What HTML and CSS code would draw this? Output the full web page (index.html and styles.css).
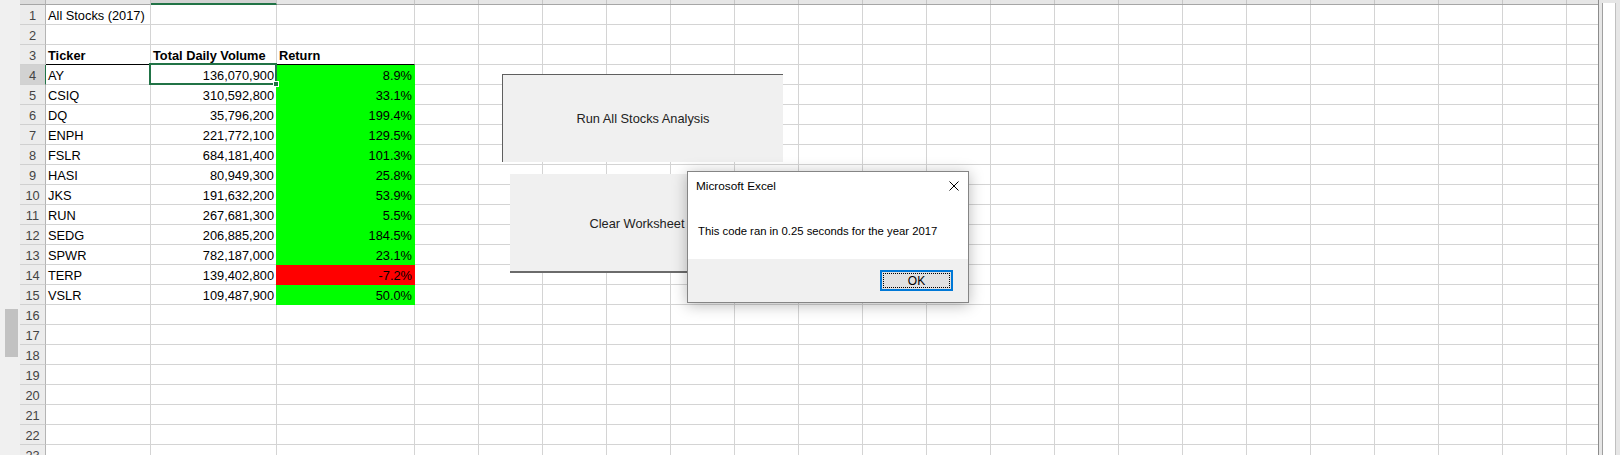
FILE: index.html
```html
<!DOCTYPE html>
<html>
<head>
<meta charset="utf-8">
<title>All Stocks (2017)</title>
<link rel="stylesheet" href="styles.css">
</head>
<body>
<div class="app">
  <div class="lstrip"><div class="thumb"></div></div>
  <div class="sheet">
    <div class="hrow"><div class="hcorner"></div><div class="hc a"></div><div class="hc b sel"></div><div class="hc cc"></div><div class="hfill"></div></div>
    <div class="row"><div class="rh">1</div><div class="c a">All Stocks (2017)</div><div class="c b"></div><div class="c cc"></div><div class="fill"></div></div>
    <div class="row"><div class="rh">2</div><div class="c a"></div><div class="c b"></div><div class="c cc"></div><div class="fill"></div></div>
    <div class="row"><div class="rh">3</div><div class="c a th">Ticker</div><div class="c b th">Total Daily Volume</div><div class="c cc th">Return</div><div class="fill"></div></div>
    <div class="row"><div class="rh sel">4</div><div class="c a">AY</div><div class="c b num active">136,070,900<div class="selbox"></div><div class="handle"></div></div><div class="c cc num g">8.9%</div><div class="fill"></div></div>
    <div class="row"><div class="rh">5</div><div class="c a">CSIQ</div><div class="c b num">310,592,800</div><div class="c cc num g">33.1%</div><div class="fill"></div></div>
    <div class="row"><div class="rh">6</div><div class="c a">DQ</div><div class="c b num">35,796,200</div><div class="c cc num g">199.4%</div><div class="fill"></div></div>
    <div class="row"><div class="rh">7</div><div class="c a">ENPH</div><div class="c b num">221,772,100</div><div class="c cc num g">129.5%</div><div class="fill"></div></div>
    <div class="row"><div class="rh">8</div><div class="c a">FSLR</div><div class="c b num">684,181,400</div><div class="c cc num g">101.3%</div><div class="fill"></div></div>
    <div class="row"><div class="rh">9</div><div class="c a">HASI</div><div class="c b num">80,949,300</div><div class="c cc num g">25.8%</div><div class="fill"></div></div>
    <div class="row"><div class="rh">10</div><div class="c a">JKS</div><div class="c b num">191,632,200</div><div class="c cc num g">53.9%</div><div class="fill"></div></div>
    <div class="row"><div class="rh">11</div><div class="c a">RUN</div><div class="c b num">267,681,300</div><div class="c cc num g">5.5%</div><div class="fill"></div></div>
    <div class="row"><div class="rh">12</div><div class="c a">SEDG</div><div class="c b num">206,885,200</div><div class="c cc num g">184.5%</div><div class="fill"></div></div>
    <div class="row"><div class="rh">13</div><div class="c a">SPWR</div><div class="c b num">782,187,000</div><div class="c cc num g">23.1%</div><div class="fill"></div></div>
    <div class="row"><div class="rh">14</div><div class="c a">TERP</div><div class="c b num">139,402,800</div><div class="c cc num r">-7.2%</div><div class="fill"></div></div>
    <div class="row"><div class="rh">15</div><div class="c a">VSLR</div><div class="c b num">109,487,900</div><div class="c cc num g">50.0%</div><div class="fill"></div></div>
    <div class="row"><div class="rh">16</div><div class="c a"></div><div class="c b"></div><div class="c cc"></div><div class="fill"></div></div>
    <div class="row"><div class="rh">17</div><div class="c a"></div><div class="c b"></div><div class="c cc"></div><div class="fill"></div></div>
    <div class="row"><div class="rh">18</div><div class="c a"></div><div class="c b"></div><div class="c cc"></div><div class="fill"></div></div>
    <div class="row"><div class="rh">19</div><div class="c a"></div><div class="c b"></div><div class="c cc"></div><div class="fill"></div></div>
    <div class="row"><div class="rh">20</div><div class="c a"></div><div class="c b"></div><div class="c cc"></div><div class="fill"></div></div>
    <div class="row"><div class="rh">21</div><div class="c a"></div><div class="c b"></div><div class="c cc"></div><div class="fill"></div></div>
    <div class="row"><div class="rh">22</div><div class="c a"></div><div class="c b"></div><div class="c cc"></div><div class="fill"></div></div>
    <div class="row"><div class="rh">23</div><div class="c a"></div><div class="c b"></div><div class="c cc"></div><div class="fill"></div></div>
  </div>
  <div class="rpanel"><div class="rtrack"></div></div>

  <div class="btn btn-run">Run All Stocks Analysis</div>
  <div class="btn btn-clear">Clear Worksheet</div>

  <div class="dlg">
    <div class="dlg-title">
      <span>Microsoft Excel</span>
      <svg class="dlg-x" width="10" height="10" viewBox="0 0 10 10"><path d="M0.5 0.5 L9.5 9.5 M9.5 0.5 L0.5 9.5" stroke="#000" stroke-width="1" fill="none"/></svg>
    </div>
    <div class="dlg-msg">This code ran in 0.25 seconds for the year 2017</div>
    <div class="dlg-foot"><div class="ok">OK</div></div>
  </div>
</div>
</body>
</html>
```

FILE: styles.css
```css
html, body {
  margin: 0;
  padding: 0;
  background: #ffffff;
}
body {
  width: 1620px;
  height: 455px;
  overflow: hidden;
  font-family: "Liberation Sans", Arial, sans-serif;
  color: #000;
}
.app {
  position: relative;
  display: flex;
  width: 1620px;
  height: 455px;
  overflow: hidden;
}

/* left scroll strip */
.lstrip {
  flex: none;
  width: 20px;
  box-sizing: border-box;
  padding-top: 309px;
  background: #f0f0f0;
}
.thumb {
  margin-left: 5px;
  width: 13px;
  height: 48px;
  background: #c2c2c2;
}

/* sheet */
.sheet {
  flex: none;
  width: 1579px;
  box-sizing: border-box;
  border-right: 1px solid #8c8c8c;
  display: flex;
  flex-direction: column;
}
.hrow {
  display: flex;
  height: 5px;
  flex: none;
}
.hcorner {
  width: 26px;
  box-sizing: border-box;
  background: #dcdcdc;
  border-right: 1px solid #b4b4b4;
  border-bottom: 1px solid #a6a6a6;
}
.hc {
  box-sizing: border-box;
  background: #e6e6e6;
  border-right: 1px solid #c6c6c6;
  border-bottom: 1px solid #a6a6a6;
}
.hc.sel {
  background: #d2d2d2;
  border-bottom: 2px solid #217346;
}
.hfill {
  flex: 1;
  border-bottom: 1px solid #a6a6a6;
  background: repeating-linear-gradient(to right, #e6e6e6 0 63px, #c6c6c6 63px 64px);
}

.row {
  display: flex;
  height: 20px;
  flex: none;
}
.rh {
  width: 26px;
  box-sizing: border-box;
  background: #ececec;
  border-right: 1px solid #b4b4b4;
  border-bottom: 1px solid #d0d0d0;
  text-align: center;
  color: #444;
  font-size: 12.8px;
  line-height: 16px;
  padding-top: 3px;
}
.rh.sel {
  background: #d2d2d2;
  border-right-color: #217346;
}
.c {
  box-sizing: border-box;
  border-right: 1px solid #d4d4d4;
  border-bottom: 1px solid #d4d4d4;
  padding: 3px 2px 0 2px;
  font-size: 12.8px;
  line-height: 16px;
  white-space: nowrap;
}
.a { width: 105px; }
.b { width: 126px; }
.cc { width: 138px; }
.num { text-align: right; }
.th {
  font-weight: bold;
  border-bottom-color: #000;
}
.g {
  background: #00ff00;
  border-right-color: #00ff00;
  border-bottom-color: #00ff00;
  box-shadow: -1px 0 0 #00ff00;
}
.r {
  background: #ff0000;
  border-right-color: #ff0000;
  border-bottom-color: #ff0000;
  box-shadow: -1px 0 0 #ff0000;
}
.fill {
  flex: 1;
  border-bottom: 1px solid #d4d4d4;
  background: repeating-linear-gradient(to right, transparent 0 63px, #d4d4d4 63px 64px);
}

/* active cell */
.active { position: relative; }
.selbox {
  position: absolute;
  left: -2px;
  top: -2px;
  right: -1px;
  bottom: -1px;
  border: 2px solid #217346;
}
.handle {
  position: absolute;
  right: -3px;
  bottom: -3px;
  width: 6px;
  height: 6px;
  box-sizing: border-box;
  background: #217346;
  border: 1px solid #ffffff;
}

/* right scroll panel */
.rpanel {
  flex: 1;
  background: #e6e6e6;
  padding: 3px 4px 0 3px;
}
.rtrack {
  height: 100%;
  background: #ffffff;
  border-left: 1px solid #a0a0a0;
  border-right: 1px solid #c0c0c0;
}

/* form buttons over the sheet */
.btn {
  position: absolute;
  box-sizing: border-box;
  background: #f0f0f0;
  display: flex;
  align-items: center;
  justify-content: center;
  font-size: 12.8px;
  color: #222;
}
.btn-run {
  left: 502px;
  top: 74px;
  width: 281px;
  height: 88px;
  border-top: 1px solid #5f5f5f;
  border-left: 1px solid #5f5f5f;
}
.btn-clear {
  left: 510px;
  top: 174px;
  width: 254px;
  height: 99px;
  border-bottom: 2px solid #6b6b6b;
  padding-top: 2px;
}

/* message box */
.dlg {
  position: absolute;
  left: 687px;
  top: 171px;
  width: 282px;
  height: 132px;
  box-sizing: border-box;
  border: 1px solid #858585;
  background: #ffffff;
  box-shadow: 0 2px 14px rgba(0, 0, 0, 0.28);
  display: flex;
  flex-direction: column;
}
.dlg-title {
  display: flex;
  justify-content: space-between;
  align-items: flex-start;
  padding: 6px 9px 0 8px;
  height: 16px;
  font-size: 11.8px;
  line-height: 16px;
}
.dlg-x {
  margin-top: 3px;
  display: block;
}
.dlg-msg {
  flex: 1;
  margin-top: 29px;
  padding-left: 10px;
  font-size: 11.3px;
  line-height: 16px;
  white-space: nowrap;
}
.dlg-foot {
  height: 43px;
  flex: none;
  box-sizing: border-box;
  background: #f0f0f0;
  display: flex;
  justify-content: flex-end;
  align-items: flex-start;
  padding: 11px 15px 0 0;
}
.ok {
  width: 73px;
  height: 21px;
  box-sizing: border-box;
  border: 2px solid #0078d7;
  background: #e1e1e1;
  outline: 1px dotted #000;
  outline-offset: -4px;
  display: flex;
  align-items: center;
  justify-content: center;
  font-size: 12px;
}
```
